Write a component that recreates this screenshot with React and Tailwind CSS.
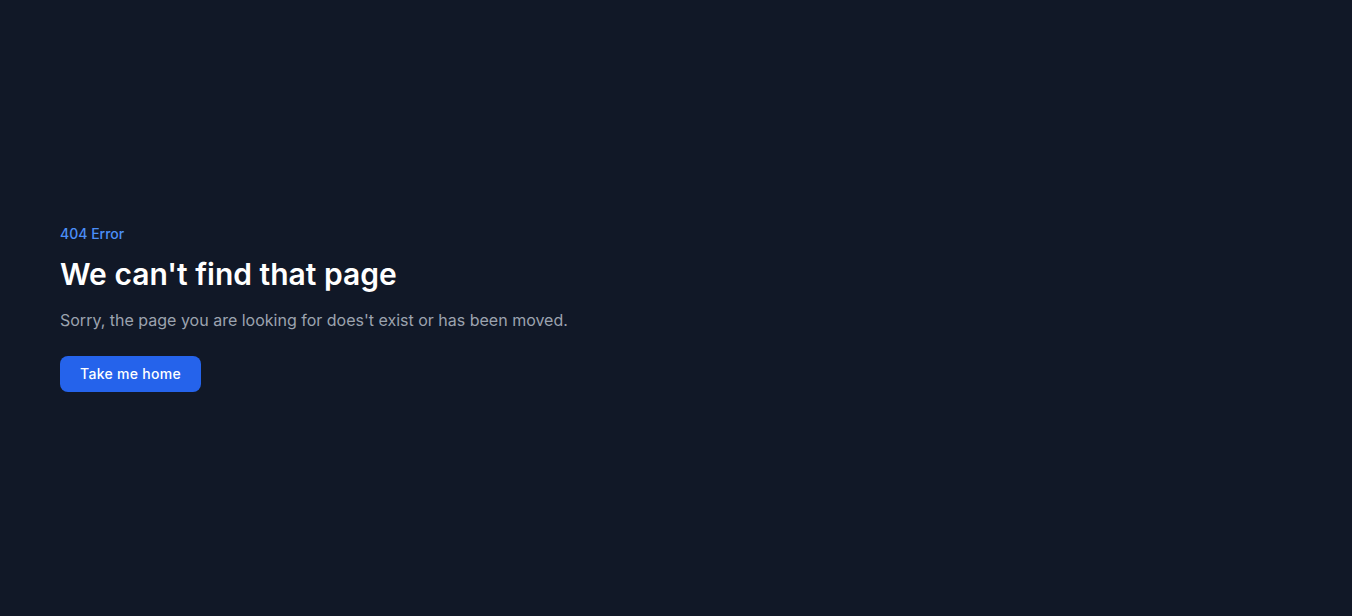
export default function App() {
  return (
    <div className="min-h-screen w-full bg-[#111827] flex items-center px-[60px]" style={{ fontFamily: "Inter, 'Noto Sans', sans-serif" }}>
      <div className="flex flex-col items-start">
        <p className="text-sm font-medium text-[#4b8ef7]">404 Error</p>
        <h1 className="mt-3 text-3xl font-semibold text-white">We can't find that page</h1>
        <p className="mt-4 text-base text-[#9ca3af]">Sorry, the page you are looking for does't exist or has been moved.</p>
        <button className="mt-6 px-5 py-2 text-sm font-medium tracking-[0.3px] text-white bg-[#2563eb] rounded-lg">Take me home</button>
      </div>
    </div>
  );
}
